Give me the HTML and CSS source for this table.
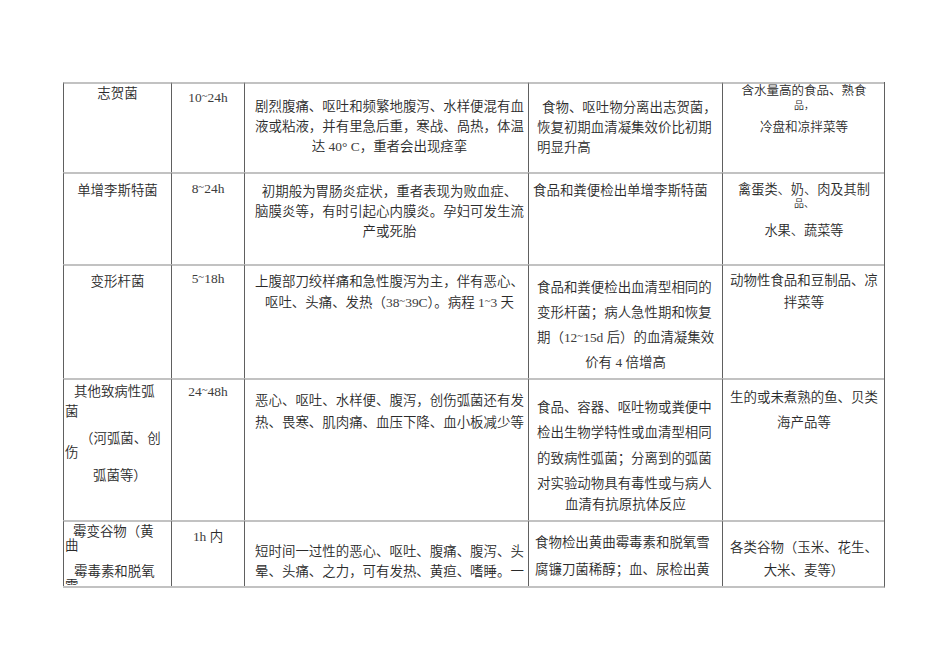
FILE: index.html
```html
<!DOCTYPE html>
<html lang="zh-CN">
<head>
<meta charset="utf-8">
<title>食物中毒</title>
<link rel="stylesheet" href="styles.css">
</head>
<body>
<div class="page">
  <div class="table">
    <!-- row 1 -->
    <div class="cell k1 s11"><div class="l">志贺菌</div></div>
    <div class="cell k2 s12"><div class="l"><span class="n">10<span class="t">~</span>24h</span></div></div>
    <div class="cell k3 s13">
      <div class="l">剧烈腹痛、呕吐和频繁地腹泻、水样便混有血</div>
      <div class="l">液或粘液，并有里急后重，寒战、咼热，体温</div>
      <div class="l">达 <span class="n">40° C</span>，重者会出现痉挛</div>
    </div>
    <div class="cell k4 s14">
      <div class="l ind5">食物、呕吐物分离出志贺菌，</div>
      <div class="l">恢复初期血清凝集效价比初期</div>
      <div class="l">明显升高</div>
    </div>
    <div class="cell k5 s15">
      <div class="l e1a">含水量高的食品、熟食</div>
      <div class="l tiny e1b">品，</div>
      <div class="l e1c">冷盘和凉拌菜等</div>
    </div>

    <!-- row 2 -->
    <div class="cell k1 s21"><div class="l">单增李斯特菌</div></div>
    <div class="cell k2 s22"><div class="l"><span class="n">8<span class="t">~</span>24h</span></div></div>
    <div class="cell k3 s23">
      <div class="l">初期般为胃肠炎症状，重者表现为败血症、</div>
      <div class="l">脑膜炎等，有时引起心内膜炎。孕妇可发生流</div>
      <div class="l">产或死胎</div>
    </div>
    <div class="cell k4 s24">
      <div class="l out4">食品和粪便检出单增李斯特菌</div>
    </div>
    <div class="cell k5 s25">
      <div class="l e2a">禽蛋类、奶、肉及其制</div>
      <div class="l tiny">品、</div>
      <div class="l e2c">水果、蔬菜等</div>
    </div>

    <!-- row 3 -->
    <div class="cell k1 s31"><div class="l">变形杆菌</div></div>
    <div class="cell k2 s32"><div class="l"><span class="n">5<span class="t">~</span>18h</span></div></div>
    <div class="cell k3 s33">
      <div class="l">上腹部刀绞样痛和急性腹泻为主，伴有恶心、</div>
      <div class="l">呕吐、头痛、发热（<span class="n">38<span class="t">~</span>39C</span>）。病程 <span class="n">1<span class="t">~</span>3</span> 天</div>
    </div>
    <div class="cell k4 s34">
      <div class="l">食品和粪便检出血清型相同的</div>
      <div class="l">变形杆菌；病人急性期和恢复</div>
      <div class="l">期（<span class="n">12<span class="t">~</span>15d</span> 后）的血清凝集效</div>
      <div class="l mid">价有 <span class="n">4</span> 倍增高</div>
    </div>
    <div class="cell k5 s35">
      <div class="l">动物性食品和豆制品、凉</div>
      <div class="l">拌菜等</div>
    </div>

    <!-- row 4 -->
    <div class="cell k1 lft s41">
      <div class="l a4a">其他致病性弧</div>
      <div class="l a4b">菌</div>
      <div class="l a4c">（河弧菌、创</div>
      <div class="l a4d">伤</div>
      <div class="l a4e">弧菌等）</div>
    </div>
    <div class="cell k2 s42"><div class="l"><span class="n">24<span class="t">~</span>48h</span></div></div>
    <div class="cell k3 s43">
      <div class="l">恶心、呕吐、水样便、腹泻，创伤弧菌还有发</div>
      <div class="l">热、畏寒、肌肉痛、血压下降、血小板减少等</div>
    </div>
    <div class="cell k4 s44">
      <div class="l">食品、容器、呕吐物或粪便中</div>
      <div class="l">检出生物学特性或血清型相同</div>
      <div class="l">的致病性弧菌；分离到的弧菌</div>
      <div class="l">对实验动物具有毒性或与病人</div>
      <div class="l mid d4e">血清有抗原抗体反应</div>
    </div>
    <div class="cell k5 s45">
      <div class="l">生的或未煮熟的鱼、贝类</div>
      <div class="l">海产品等</div>
    </div>

    <!-- row 5 -->
    <div class="cell k1 lft s51">
      <div class="l a5a">霉变谷物（黄</div>
      <div class="l a5b">曲</div>
      <div class="l a5c">霉毒素和脱氧</div>
      <div class="l a5d">雪</div>
    </div>
    <div class="cell k2 s52"><div class="l"><span class="n">1h</span> 内</div></div>
    <div class="cell k3 s53">
      <div class="l">短时间一过性的恶心、呕吐、腹痛、腹泻、头</div>
      <div class="l">晕、头痛、之力，可有发热、黄疸、嗜睡。一</div>
    </div>
    <div class="cell k4 s54">
      <div class="l out2">食物检出黄曲霉毒素和脱氧雪</div>
      <div class="l out2">腐镰刀菌稀醇；血、尿检出黄</div>
    </div>
    <div class="cell k5 s55">
      <div class="l">各类谷物（玉米、花生、</div>
      <div class="l">大米、麦等）</div>
    </div>
  </div>
</div>
</body>
</html>
```

FILE: styles.css
```css
* {
  box-sizing: border-box;
}

html,
body {
  margin: 0;
  padding: 0;
  background: #ffffff;
}

body {
  font-family: "Liberation Serif", "Noto Sans CJK SC", serif;
  color: #2a2a2a;
}

.page {
  width: 950px;
  height: 672px;
  padding: 82px 0 0 63px;
}

.table {
  display: grid;
  grid-template-columns: 108px 73px 284px 194px 162px;
  grid-template-rows: 90px 92px 114px 142px 66px;
  width: 822px;
  border-right: 1px solid #606060;
  border-bottom: 2px solid #c2c2c2;
}

.cell {
  border-left: 1px solid #606060;
  border-top: 2px solid #c2c2c2;
  overflow: hidden;
  font-size: 13.45px;
  line-height: 20px;
  font-weight: 350;
  white-space: nowrap;
}

.l {
  display: block;
}

.n {
  font-weight: 400;
  color: #3c3c3c;
}

.t {
  font-size: 0.8em;
  line-height: 0;
  vertical-align: 0.32em;
}

/* column alignment */
.k1,
.k2 {
  text-align: center;
}

.k3 {
  text-align: center;
  padding-left: 9px;
  padding-right: 3px;
}

.k4 {
  text-align: left;
  padding-left: 8px;
  padding-right: 8px;
}

.k5 {
  text-align: center;
  padding-left: 1px;
}

.lft {
  text-align: left;
}

.mid {
  text-align: center;
}

/* row 1 */
.s11 { padding-top: 0; }
.s12 { padding-top: 3.5px; }
.s13 { padding-top: 13px; }
.s14 { padding-top: 14px; }
.s15 { padding-top: 0; }

.ind5 { margin-left: 5px; }

.e1a {
  font-size: 12.5px;
  line-height: 14px;
}

.tiny {
  font-size: 10px;
  line-height: 12px;
}

.e1b { margin-top: 1.9px; }

.e1c {
  font-size: 12.6px;
  margin-top: 5.4px;
}

/* row 2 */
.s21 { padding-top: 6.5px; }
.s22 { padding-top: 4.5px; }
.s23 { padding-top: 8px; }
.s24 { padding-top: 6.5px; }
.s25 { padding-top: 8.3px; }

.out4 { margin-left: -4px; }

.e2a {
  font-size: 13.2px;
  line-height: 16px;
}

.e2c {
  font-size: 13.2px;
  margin-top: 10.5px;
}

/* row 3 */
.s31 { padding-top: 6px; }
.s32 { padding-top: 2.5px; }
.s33 { padding-top: 4.7px; line-height: 21px; }
.s34 { padding-top: 8.7px; line-height: 25px; }
.s35 { padding-top: 4px; line-height: 22px; }

/* row 4 */
.s41 { padding-top: 2px; padding-left: 0; }
.s42 { padding-top: 2px; }
.s43 { padding-top: 9.5px; line-height: 22px; }
.s44 { padding-top: 14.5px; line-height: 25.5px; }
.s45 { padding-top: 4.7px; line-height: 25px; }

.a4a { padding-left: 10px; }
.a4b { padding-left: 1px; line-height: 19px; }
.a4c { padding-left: 16px; line-height: 18px; margin-top: 8.9px; }
.a4d { padding-left: 1px; line-height: 10px; }
.a4e { padding-left: 29px; margin-top: 7.7px; }

.d4e { line-height: 15px; }

/* row 5 */
.s51 { padding-top: 1px; }
.s52 { padding-top: 5px; }
.s53 { padding-top: 20px; }
.s54 { padding-top: 8px; line-height: 26.7px; }
.s55 { padding-top: 13.7px; line-height: 23.3px; }

.a5a { padding-left: 9px; line-height: 18px; }
.a5b { padding-left: 1px; line-height: 10px; }
.a5c { padding-left: 10px; margin-top: 11.3px; }
.a5d { padding-left: 1px; line-height: 10px; margin-top: -1.7px; }

.out2 { margin-left: -2px; }
```
